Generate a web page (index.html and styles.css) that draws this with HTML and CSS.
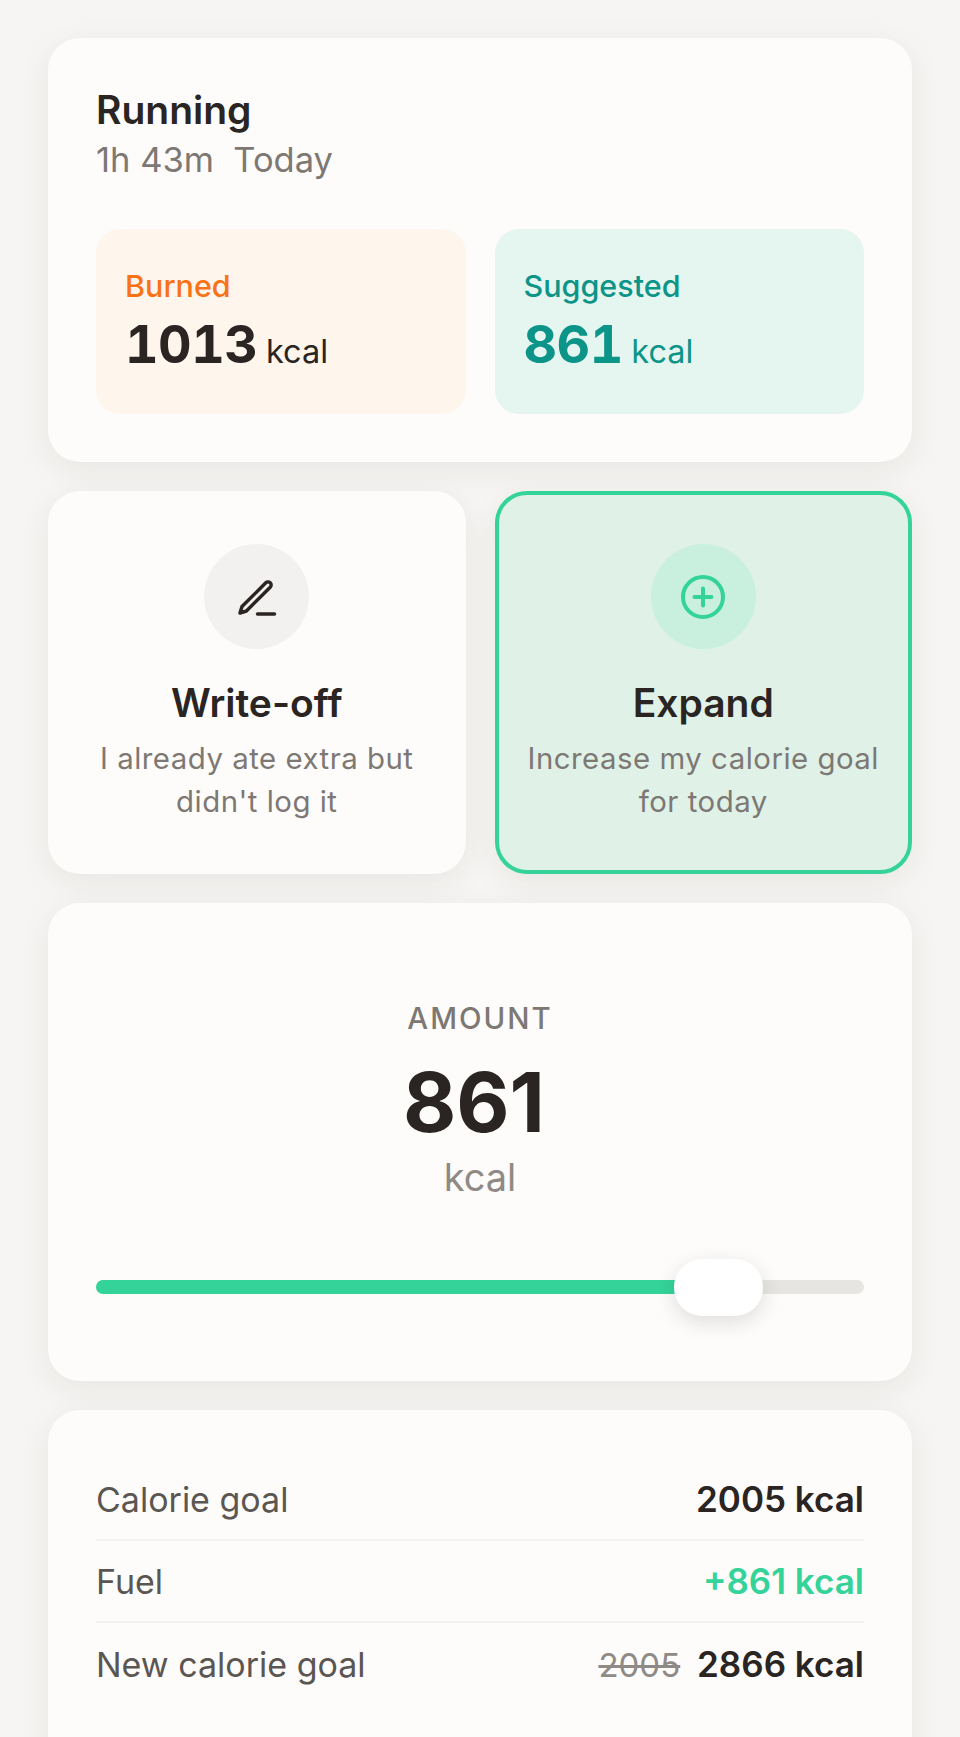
FILE: index.html
```html
<!DOCTYPE html>
<html lang="en">
<head>
    <meta charset="UTF-8">
    <meta name="viewport" content="width=device-width, initial-scale=1.0">
    <title>Fuel</title>
    <link rel="stylesheet" href="styles.css">
</head>
<body>

<main class="screen">
    <section class="card workout-card">
        <h1 class="workout-title">Running</h1>
        <p class="workout-meta">1h 43m&nbsp; Today</p>
        <div class="metric-row">
            <div class="metric metric-burned">
                <div class="metric-label">Burned</div>
                <div class="metric-value"><strong>1013</strong> <span>kcal</span></div>
            </div>
            <div class="metric metric-suggested">
                <div class="metric-label">Suggested</div>
                <div class="metric-value"><strong>861</strong> <span>kcal</span></div>
            </div>
        </div>
    </section>

    <section class="option-row">
        <div class="card option">
            <div class="option-icon">
                <svg width="44" height="44" viewBox="0 0 44 44" fill="none" stroke="currentColor" stroke-width="3.500" stroke-linecap="round" stroke-linejoin="round">
                    <path d="M5 38L7 31.600L30.800 7.800A3.100 3.100 0 0 1 35.200 12.200L11.400 36Z"/>
                    <path d="M22.500 39h17"/>
                </svg>
            </div>
            <h2 class="option-title">Write-off</h2>
            <p class="option-text">I already ate extra but didn't log it</p>
        </div>
        <div class="card option option-active">
            <div class="option-icon">
                <svg width="44" height="44" viewBox="0 0 44 44" fill="none" stroke="currentColor" stroke-width="4" stroke-linecap="round">
                    <circle cx="22" cy="22" r="20"/>
                    <path d="M22 13.500v17M13.500 22h17"/>
                </svg>
            </div>
            <h2 class="option-title">Expand</h2>
            <p class="option-text">Increase my calorie goal for today</p>
        </div>
    </section>

    <section class="card amount-card">
        <div class="amount-label">AMOUNT</div>
        <div class="amount-value">861</div>
        <div class="amount-unit">kcal</div>
        <div class="slider">
            <div class="slider-fill"></div>
            <div class="slider-thumb"></div>
        </div>
    </section>

    <section class="card summary-card">
        <div class="summary-row">
            <span class="summary-name">Calorie goal</span>
            <span class="summary-value">2005 kcal</span>
        </div>
        <div class="summary-row">
            <span class="summary-name">Fuel</span>
            <span class="summary-value summary-plus">+861 kcal</span>
        </div>
        <div class="summary-row">
            <span class="summary-name">New calorie goal</span>
            <span class="summary-value"><s>2005</s> 2866 kcal</span>
        </div>
    </section>
</main>

</body>
</html>
```

FILE: styles.css
```css
/* Global Styles */
html, body {
    height: 1737px;
    overflow: hidden;
}

body {
    margin: 0;
    background-color: #f6f5f3;
    color: #2a2522;
    font-family: Inter, 'Noto Sans', sans-serif;
}

.screen {
    display: flex;
    flex-direction: column;
    gap: 29px;
    padding: 38px 48px 0;
}

/* Cards */
.card {
    background-color: #fdfcfa;
    border-radius: 32px;
    box-shadow: 0 8px 32px rgba(42, 37, 34, 0.07);
}

/* Workout */
.workout-card {
    padding: 48px;
}

.workout-title {
    margin: 0;
    font-size: 39px;
    line-height: 48px;
    font-weight: 600;
}

.workout-meta {
    margin: 6px 0 0;
    font-size: 34.500px;
    line-height: 40px;
    color: #7d7874;
}

.metric-row {
    display: grid;
    grid-template-columns: 1fr 1fr;
    gap: 29px;
    margin-top: 49px;
}

.metric {
    height: 185px;
    box-sizing: border-box;
    padding: 39px 29px 0;
    border-radius: 24px;
}

.metric-burned {
    background-color: #fef5ed;
}

.metric-suggested {
    background-color: #e4f6ef;
    color: #0d9488;
}

.metric-label {
    font-size: 30.500px;
    line-height: 36px;
    font-weight: 500;
}

.metric-burned .metric-label {
    color: #f97316;
}

.metric-value {
    margin-top: 8px;
    line-height: 66px;
}

.metric-value strong {
    font-size: 52px;
    font-weight: 700;
    letter-spacing: -0.5px;
    font-variant-numeric: tabular-nums;
}

.metric-value span {
    margin-left: 4px;
    font-size: 32.500px;
}

/* Options */
.option-row {
    display: grid;
    grid-template-columns: 1fr 1fr;
    gap: 29px;
}

.option {
    height: 383px;
    box-sizing: border-box;
    padding: 53px 24px 0;
    text-align: center;
}

.option-active {
    padding: 49px 20px 0;
    border: 4px solid #34d399;
    background-color: #e0f1e7;
}

.option-icon {
    display: flex;
    align-items: center;
    justify-content: center;
    width: 105px;
    height: 105px;
    margin: 0 auto;
    border-radius: 50%;
    background-color: #f2f1ef;
}

.option-active .option-icon {
    background-color: #c9f0de;
    color: #34d399;
}

.option-title {
    margin: 30px 0 0;
    font-size: 39px;
    line-height: 48px;
    font-weight: 600;
}

.option-text {
    margin: 10px 0 0;
    font-size: 29.400px;
    line-height: 43px;
    letter-spacing: 0.5px;
    color: #7d7874;
}

/* Amount */
.amount-card {
    height: 478px;
    box-sizing: border-box;
    padding: 99px 48px 0;
    text-align: center;
}

.amount-label {
    font-size: 29.400px;
    line-height: 34px;
    font-weight: 500;
    letter-spacing: 2px;
    color: #7d7874;
}

.amount-value {
    margin-top: 16px;
    padding-right: 12px;
    font-size: 82px;
    line-height: 102px;
    font-weight: 700;
}

.amount-unit {
    font-size: 38px;
    line-height: 46px;
    color: #8f8a86;
}

.slider {
    position: relative;
    height: 14px;
    margin-top: 80px;
    border-radius: 7px;
    background-color: #e6e5e2;
}

.slider-fill {
    width: 600px;
    height: 100%;
    border-radius: 7px 0 0 7px;
    background-color: #34d399;
}

.slider-thumb {
    position: absolute;
    left: 578px;
    top: -21px;
    width: 89px;
    height: 57px;
    border-radius: 28px;
    background-color: #fff;
    box-shadow: 0 6px 20px rgba(42, 37, 34, 0.14);
}

/* Summary */
.summary-card {
    height: 400px;
    box-sizing: border-box;
    padding: 49px 48px;
}

.summary-row {
    display: flex;
    align-items: center;
    justify-content: space-between;
    height: 82px;
    font-size: 34px;
    border-bottom: 2px solid #f3f2f0;
    box-sizing: border-box;
}

.summary-row:last-child {
    border-bottom: none;
}

.summary-name {
    color: #5b5652;
}

.summary-value {
    font-size: 35px;
    font-weight: 600;
}

.summary-plus {
    color: #34d399;
}

.summary-value s {
    margin-right: 8px;
    font-size: 33px;
    font-weight: 400;
    color: #8f8a86;
}
```
